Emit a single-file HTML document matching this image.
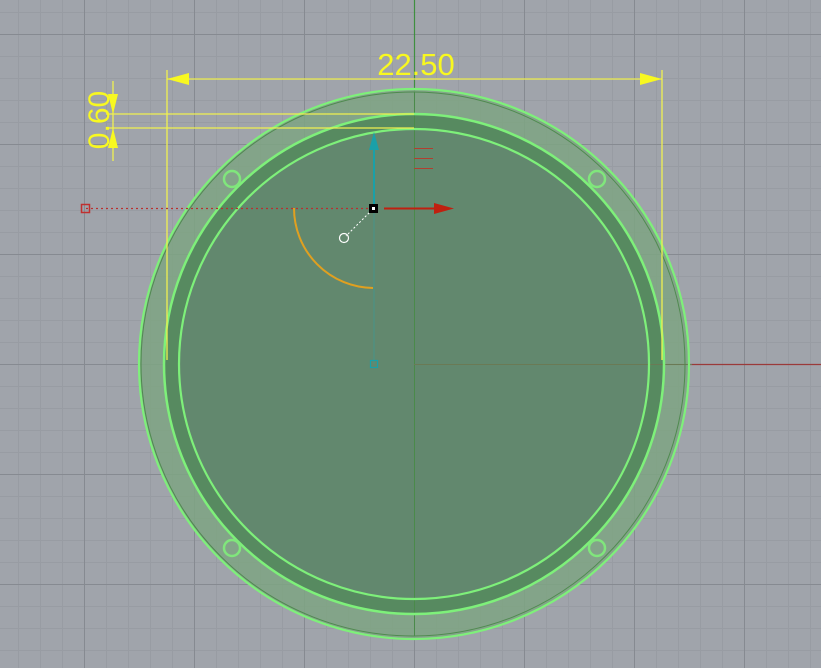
<!DOCTYPE html>
<html><head><style>html,body{margin:0;padding:0;width:821px;height:668px;overflow:hidden;background:#a0a4ab}</style></head>
<body>
<svg width="821" height="668" viewBox="0 0 821 668" xmlns="http://www.w3.org/2000/svg">
<defs>
<pattern id="minor" width="22" height="22" patternUnits="userSpaceOnUse" x="18" y="12">
<path d="M0 0.5H22M0.5 0V22" stroke="#989ca3" stroke-width="1" fill="none"/>
</pattern>
<pattern id="major" width="110" height="110" patternUnits="userSpaceOnUse" x="84" y="34">
<path d="M0 0.5H110M0.5 0V110" stroke="#868a91" stroke-width="1" fill="none"/>
</pattern>
</defs>
<rect width="821" height="668" fill="#a0a4ab"/>
<rect width="821" height="668" fill="url(#minor)"/>
<rect width="821" height="668" fill="url(#major)"/>
<line x1="414.5" y1="0" x2="414.5" y2="364" stroke="#3f8f3f" stroke-width="1.2"/>
<line x1="414" y1="364.5" x2="821" y2="364.5" stroke="#9a3a3a" stroke-width="1.2"/>
<circle cx="414" cy="364" r="274" fill="#7ea482" fill-opacity="0.85"/>
<circle cx="414" cy="364" r="250" fill="#578a60"/>
<circle cx="414" cy="364" r="235" fill="#62886e"/>
<line x1="414.5" y1="92" x2="414.5" y2="636" stroke="#4a8a4a" stroke-width="1"/>
<line x1="414" y1="364.5" x2="692" y2="364.5" stroke="#6a7a55" stroke-width="1"/>
<circle cx="414" cy="364" r="275" fill="none" stroke="#7ef07a" stroke-width="2.2"/>
<circle cx="413" cy="364" r="272" fill="none" stroke="#4f8a4f" stroke-width="1"/>
<circle cx="414" cy="364" r="250" fill="none" stroke="#7ef07a" stroke-width="2.5"/>
<circle cx="414" cy="364" r="235" fill="none" stroke="#7ef07a" stroke-width="2.2"/>
<g fill="none" stroke="#80e67c" stroke-width="2.5">
<circle cx="232" cy="179" r="8"/><circle cx="597" cy="179" r="8"/>
<circle cx="232" cy="548" r="8"/><circle cx="597" cy="548" r="8"/>
</g>
<g stroke="#f0f050" stroke-width="1.3" fill="none">
<line x1="167" y1="70" x2="167" y2="360"/>
<line x1="662" y1="70" x2="662" y2="360"/>
<line x1="167" y1="79" x2="662" y2="79"/>
<line x1="106" y1="114" x2="414" y2="114"/>
<line x1="106" y1="128" x2="414" y2="128"/>
<line x1="113" y1="81" x2="113" y2="161"/>
</g>
<g fill="#f8f820">
<polygon points="167,79 189,73 189,85"/>
<polygon points="662,79 640,73 640,85"/>
<polygon points="113,114 108,94 118,94"/>
<polygon points="113,128 108,148 118,148"/>
</g>
<text x="416" y="75" font-family="Liberation Sans, sans-serif" font-size="31" fill="#f8f820" text-anchor="middle">22.50</text>
<text transform="translate(109,120) rotate(-90)" font-family="Liberation Sans, sans-serif" font-size="30" fill="#f8f820" text-anchor="middle">0.60</text>
<line x1="86" y1="208.5" x2="372" y2="208.5" stroke="#b83030" stroke-width="1.3" stroke-dasharray="2,3"/>
<rect x="81.5" y="204.5" width="8" height="8" fill="none" stroke="#c03030" stroke-width="1.5"/>
<line x1="374" y1="364" x2="374" y2="210" stroke="#2aa0a8" stroke-width="0.8" opacity="0.6"/>
<line x1="374" y1="205" x2="374" y2="150" stroke="#1aa0a8" stroke-width="2"/>
<polygon points="374,132 369,150 379,150" fill="#1aa0a8"/>
<rect x="370.5" y="360.5" width="7" height="7" fill="none" stroke="#1aa0a8" stroke-width="1.2"/>
<line x1="384" y1="208.5" x2="436" y2="208.5" stroke="#c02010" stroke-width="2"/>
<polygon points="454,208.5 434,203 434,214" fill="#c02010"/>
<path d="M294 208 A80 80 0 0 0 373 288" fill="none" stroke="#e0a020" stroke-width="2"/>
<line x1="372" y1="210" x2="346" y2="236" stroke="#ffffff" stroke-width="1" stroke-dasharray="2,2"/>
<circle cx="344" cy="238" r="4.5" fill="none" stroke="#ffffff" stroke-width="1.2"/>
<rect x="369" y="204" width="9" height="9" fill="#000"/>
<rect x="372" y="207" width="3" height="3" fill="#fff"/>
<g stroke="#b04030" stroke-width="1"><line x1="414" y1="148.5" x2="433" y2="148.5"/><line x1="414" y1="158.5" x2="433" y2="158.5"/><line x1="414" y1="168.5" x2="433" y2="168.5"/></g>
</svg>
</body></html>
